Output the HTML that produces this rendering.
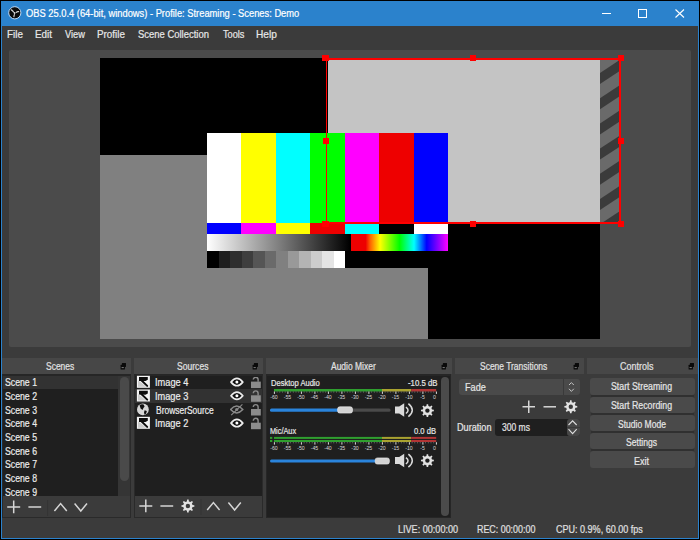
<!DOCTYPE html>
<html><head><meta charset="utf-8">
<style>
*{box-sizing:border-box;margin:0;padding:0}
html,body{width:700px;height:540px;overflow:hidden;background:#000}
body{position:relative;font-family:"Liberation Sans",sans-serif;color:#e8e8e8}
.a{position:absolute}
.t{position:absolute;white-space:nowrap;line-height:1;transform-origin:0 0;-webkit-text-stroke:0.2px currentColor}
.dt{position:absolute;top:358px;height:16px;background:#474747}
.fl{position:absolute;top:363px;width:6px;height:6px}
.tk{position:absolute;font-size:5.2px;line-height:1;color:#d8d8d8;white-space:nowrap}
</style></head>
<body>
<div class="a" style="left:1px;top:1px;width:698px;height:538px;background:#2b82cc"></div>
<div class="a" style="left:2px;top:26px;width:696px;height:512px;background:#3b3b3b"></div>
<!-- OBS logo -->
<svg class="a" style="left:0;top:0" width="30" height="26" viewBox="0 0 30 26">
 <circle cx="14.8" cy="12.8" r="6.1" fill="#0a0a0a" stroke="#cfe6ff" stroke-width="0.9"/>
 <g fill="none" stroke="#d0d0d0" stroke-linecap="round"><path d="M11.4 9.9 Q12.6 10.6 13.5 12" stroke-width="1.3"/><path d="M16.3 12.3 Q17.2 11.3 18.6 11.6" stroke-width="1.2"/><path d="M14.4 14.6 Q14 15.6 13.9 16.6" stroke-width="1.2"/></g><circle cx="14.6" cy="13" r="0.9" fill="#e0e0e0"/>
</svg>
<!-- window controls -->
<div class="a" style="left:602px;top:13px;width:9px;height:1px;background:#fff"></div>
<div class="a" style="left:638px;top:9px;width:9px;height:9px;border:1px solid #fff"></div>
<svg class="a" style="left:675px;top:9px" width="10" height="9" viewBox="0 0 10 9"><path d="M0.5 0.5 L9 8.5 M9 0.5 L0.5 8.5" stroke="#fff" stroke-width="1.1"/></svg>

<!-- preview -->
<div class="a" style="left:9px;top:50px;width:682px;height:297px;background:#4b4b4b;border-radius:2px"></div>
<div class="a" style="left:100px;top:58px;width:500px;height:281px;background:#000;overflow:hidden">
 <div class="a" style="left:227.5px;top:1.5px;width:273px;height:164px;background:#c4c4c4"></div>
 <div class="a" style="left:0;top:97px;width:328px;height:184px;background:#808080"></div>
 <div class="a" style="left:107px;top:75px;width:241px;height:135px;background:#000">
  <div class="a" style="left:0;top:0;width:241px;height:90px;display:flex">
   <div style="flex:1;background:#fff"></div><div style="flex:1;background:#ff0"></div><div style="flex:1;background:#0ff"></div><div style="flex:1;background:#0f0"></div><div style="flex:1;background:#f0f"></div><div style="flex:1;background:#e00"></div><div style="flex:1;background:#00f"></div>
  </div>
  <div class="a" style="left:0;top:90px;width:241px;height:11px;display:flex">
   <div style="flex:1;background:#00f"></div><div style="flex:1;background:#f0f"></div><div style="flex:1;background:#ff0"></div><div style="flex:1;background:#e00"></div><div style="flex:1;background:#0ff"></div><div style="flex:1;background:#000"></div><div style="flex:1;background:#fff"></div>
  </div>
  <div class="a" style="left:0;top:101px;width:143px;height:17px;background:linear-gradient(to right,#fff,#000)"></div>
  <div class="a" style="left:144px;top:101px;width:97px;height:17px;background:linear-gradient(to right,#e00 0%,#e00 15%,#f60 20%,#ff0 30%,#0f0 50%,#0ff 65%,#00f 78%,#f0f 100%)"></div>
  <div class="a" style="left:0;top:118px;width:138px;height:17px;display:flex">
   <div style="flex:1;background:#000"></div><div style="flex:1;background:#1e1e1e"></div><div style="flex:1;background:#2e2e2e"></div><div style="flex:1;background:#3e3e3e"></div><div style="flex:1;background:#555"></div><div style="flex:1;background:#6a6a6a"></div><div style="flex:1;background:#808080"></div><div style="flex:1;background:#999"></div><div style="flex:1;background:#b4b4b4"></div><div style="flex:1;background:#ccc"></div><div style="flex:1;background:#e4e4e4"></div><div style="flex:1;background:#fff"></div>
  </div>
 </div>
</div>
<svg class="a" style="left:600px;top:58px" width="20" height="165" viewBox="600 58 20 165"><rect x="600" y="58" width="20" height="165" fill="#6a6a6a"/><g fill="#3b3b3b"><path d="M600 22.60 L620 9.40 L620 20.40 L600 33.60 Z"/><path d="M600 47.80 L620 34.60 L620 45.60 L600 58.80 Z"/><path d="M600 73.00 L620 59.80 L620 70.80 L600 84.00 Z"/><path d="M600 98.20 L620 85.00 L620 96.00 L600 109.20 Z"/><path d="M600 123.40 L620 110.20 L620 121.20 L600 134.40 Z"/><path d="M600 148.60 L620 135.40 L620 146.40 L600 159.60 Z"/><path d="M600 173.80 L620 160.60 L620 171.60 L600 184.80 Z"/><path d="M600 199.00 L620 185.80 L620 196.80 L600 210.00 Z"/><path d="M600 224.20 L620 211.00 L620 222.00 L600 235.20 Z"/><path d="M600 249.40 L620 236.20 L620 247.20 L600 260.40 Z"/><path d="M600 274.60 L620 261.40 L620 272.40 L600 285.60 Z"/></g></svg>
<div class="a" style="left:326px;top:57.8px;width:295px;height:2px;background:#f00"></div>
<div class="a" style="left:326px;top:222px;width:295px;height:2px;background:#f00"></div>
<div class="a" style="left:325.9px;top:58px;width:1.5px;height:166px;background:#f00"></div>
<div class="a" style="left:619.1px;top:58px;width:2px;height:166px;background:#f00"></div>
<div class="a" style="left:322.40px;top:54.95px;width:6.6px;height:6.5px;background:#f00"></div>
<div class="a" style="left:469.70px;top:54.95px;width:6.6px;height:6.5px;background:#f00"></div>
<div class="a" style="left:617.50px;top:54.95px;width:6.6px;height:6.5px;background:#f00"></div>
<div class="a" style="left:322.50px;top:137.85px;width:6.6px;height:6.5px;background:#f00"></div>
<div class="a" style="left:617.50px;top:137.85px;width:6.6px;height:6.5px;background:#f00"></div>
<div class="a" style="left:322.40px;top:220.95px;width:6.6px;height:6.5px;background:#f00"></div>
<div class="a" style="left:469.70px;top:220.95px;width:6.6px;height:6.5px;background:#f00"></div>
<div class="a" style="left:617.50px;top:220.95px;width:6.6px;height:6.5px;background:#f00"></div>

<!-- dock titles -->
<div class="dt" style="left:2px;width:129px"></div>
<div class="dt" style="left:134px;width:129px"></div>
<div class="dt" style="left:266px;width:186px"></div>
<div class="dt" style="left:455px;width:129px"></div>
<div class="dt" style="left:587px;width:111px"></div>

<!-- Scenes dock body -->
<div class="a" style="left:2px;top:374px;width:129px;height:144px;border:1px solid #2a2a2a;border-top:2px solid #262626;background:#3b3b3b"></div>
<div class="a" style="left:3px;top:376px;width:115px;height:120px;background:#1f1f1f"></div>
<div class="a" style="left:3px;top:375.6px;width:115px;height:13.6px;background:#323232"></div>
<div class="a" style="left:118px;top:376px;width:12px;height:120px;background:#353535"></div>
<div class="a" style="left:120px;top:376.6px;width:9px;height:104px;background:#4a4a4a;border-radius:4.5px"></div>

<!-- Sources dock body -->
<div class="a" style="left:134px;top:374px;width:129px;height:144px;border:1px solid #2a2a2a;border-top:2px solid #262626;background:#3b3b3b"></div>
<div class="a" style="left:135px;top:376px;width:127px;height:120px;background:#1f1f1f"></div>
<div class="a" style="left:135px;top:389.3px;width:127px;height:13.8px;background:#323232"></div>

<!-- Audio dock body -->
<div class="a" style="left:266px;top:374px;width:185px;height:143.5px;border:1px solid #262626;border-top:2px solid #262626;background:#1f1f1f"></div>
<div class="a" style="left:441px;top:377px;width:8px;height:138.5px;background:#4b4b4b;border-radius:4px"></div>


<!-- Scenes toolbar -->
<svg class="a" style="left:2px;top:495.5px" width="129" height="22" viewBox="0 0 129 22">
 <g stroke="#d6d6d6" stroke-width="1.5" fill="none">
  <path d="M5.2 11 H18.2 M11.7 4.6 V17.2"/>
  <path d="M26.4 11 H39.2"/>
  <path d="M52.4 15 L58.6 7.6 L64.8 15"/>
  <path d="M72.6 7.6 L78.8 15 L85 7.6"/>
 </g>
 <path d="M45.6 4 V20" stroke="#343434" stroke-width="1"/>
</svg>
<!-- Sources toolbar -->
<svg class="a" style="left:134px;top:495px" width="129" height="22" viewBox="0 0 129 22">
 <g stroke="#d6d6d6" stroke-width="1.5" fill="none">
  <path d="M5.3 11 H18.3 M11.8 4.6 V17.2"/>
  <path d="M26.4 11 H39.2"/>
  <path d="M73.2 15 L79.4 7.6 L85.6 15"/>
  <path d="M94.4 7.6 L100.6 15 L106.8 7.6"/>
 </g>
 <g transform="translate(53.9 11)"><g><path d="M-0.99 -4.59 L-0.76 -6.45 L0.76 -6.45 L0.99 -4.59 A4.70 4.70 0 0 1 2.55 -3.95 L4.02 -5.10 L5.10 -4.02 L3.95 -2.55 A4.70 4.70 0 0 1 4.59 -0.99 L6.45 -0.76 L6.45 0.76 L4.59 0.99 A4.70 4.70 0 0 1 3.95 2.55 L5.10 4.02 L4.02 5.10 L2.55 3.95 A4.70 4.70 0 0 1 0.99 4.59 L0.76 6.45 L-0.76 6.45 L-0.99 4.59 A4.70 4.70 0 0 1 -2.55 3.95 L-4.02 5.10 L-5.10 4.02 L-3.95 2.55 A4.70 4.70 0 0 1 -4.59 0.99 L-6.45 0.76 L-6.45 -0.76 L-4.59 -0.99 A4.70 4.70 0 0 1 -3.95 -2.55 L-5.10 -4.02 L-4.02 -5.10 L-2.55 -3.95 A4.70 4.70 0 0 1 -0.99 -4.59 Z M2.20 0 A2.20 2.20 0 1 0 -2.20 0 A2.20 2.20 0 1 0 2.20 0 Z" fill="#e2e2e2" fill-rule="evenodd"/></g></g>
 <path d="M67 4 V20" stroke="#343434" stroke-width="1"/>
</svg>

<!-- Sources icons -->
<svg class="a" style="left:136px;top:375px" width="14" height="56" viewBox="0 0 14 56">
 <g transform="translate(0.9 0.8)"><g>
   <rect x="0" y="0" width="13" height="12" fill="#f4f4f4"/>
   <path d="M1.1 4.4 L1.1 10.9 L9.4 10.9 Z" fill="#cdcdcd"/>
   <path d="M2.1 1.2 H10.9 V3.9 L8.6 5.3 L2.1 5.1 Z" fill="#0d0d0d"/>
   <path d="M4.2 4.2 L10.3 10.1" stroke="#0d0d0d" stroke-width="2" stroke-linecap="round"/>
  </g></g>
 <g transform="translate(0.9 14.5)"><g>
   <rect x="0" y="0" width="13" height="12" fill="#f4f4f4"/>
   <path d="M1.1 4.4 L1.1 10.9 L9.4 10.9 Z" fill="#cdcdcd"/>
   <path d="M2.1 1.2 H10.9 V3.9 L8.6 5.3 L2.1 5.1 Z" fill="#0d0d0d"/>
   <path d="M4.2 4.2 L10.3 10.1" stroke="#0d0d0d" stroke-width="2" stroke-linecap="round"/>
  </g></g>
 <g transform="translate(0.9 41.8)"><g>
   <rect x="0" y="0" width="13" height="12" fill="#f4f4f4"/>
   <path d="M1.1 4.4 L1.1 10.9 L9.4 10.9 Z" fill="#cdcdcd"/>
   <path d="M2.1 1.2 H10.9 V3.9 L8.6 5.3 L2.1 5.1 Z" fill="#0d0d0d"/>
   <path d="M4.2 4.2 L10.3 10.1" stroke="#0d0d0d" stroke-width="2" stroke-linecap="round"/>
  </g></g>
 <circle cx="6.9" cy="34.4" r="5.9" fill="#d6d6d6"/>
 <path d="M3.6 30.2 Q5.4 28.8 7.6 29.6 L8.6 31.4 L7.4 33 L6.6 35 L4.6 33.4 Z" fill="#111"/>
 <path d="M8.6 35.2 L10.8 36 L10.2 38.6 L8.6 39.8 L8 37.4 Z" fill="#111"/>
</svg>
<svg class="a" style="left:230px;top:377px" width="34" height="56" viewBox="0 0 34 56">
 <g transform="translate(0.2 1.1)"><g>
   <path d="M0.8 4 Q6.7 -3.3 12.6 4 Q6.7 11.3 0.8 4 Z" fill="#101010" stroke="#ececec" stroke-width="1.7" stroke-linejoin="round"/>
   <circle cx="6.7" cy="4" r="1.5" fill="#ffffff"/>
  </g></g>
 <g transform="translate(0.2 14.8)"><g>
   <path d="M0.8 4 Q6.7 -3.3 12.6 4 Q6.7 11.3 0.8 4 Z" fill="#101010" stroke="#ececec" stroke-width="1.7" stroke-linejoin="round"/>
   <circle cx="6.7" cy="4" r="1.5" fill="#ffffff"/>
  </g></g>
 <g transform="translate(0.2 42.1)"><g>
   <path d="M0.8 4 Q6.7 -3.3 12.6 4 Q6.7 11.3 0.8 4 Z" fill="#101010" stroke="#ececec" stroke-width="1.7" stroke-linejoin="round"/>
   <circle cx="6.7" cy="4" r="1.5" fill="#ffffff"/>
  </g></g>
 <g transform="translate(0 28.5)">
  <path d="M0.6 4 Q6.7 -2.8 12.8 4 Q6.7 10.8 0.6 4 Z" fill="none" stroke="#8a8a8a" stroke-width="1.5"/>
  <circle cx="6.7" cy="4" r="1.6" fill="#8a8a8a"/>
  <path d="M1.2 9.6 L12.4 -1.2" stroke="#8a8a8a" stroke-width="1.1"/>
 </g>
 <g transform="translate(21 0)"><g>
   <rect x="0" y="4.6" width="9.8" height="6.5" fill="#8c8c8c"/>
   <path d="M2.3 2.6 A2.4 2.4 0 0 1 7.1 2.6 V4.8" fill="none" stroke="#8c8c8c" stroke-width="1.4"/>
  </g></g>
 <g transform="translate(21 13.7)"><g>
   <rect x="0" y="4.6" width="9.8" height="6.5" fill="#8c8c8c"/>
   <path d="M2.3 2.6 A2.4 2.4 0 0 1 7.1 2.6 V4.8" fill="none" stroke="#8c8c8c" stroke-width="1.4"/>
  </g></g>
 <g transform="translate(21 27.4)"><g>
   <rect x="0" y="4.6" width="9.8" height="6.5" fill="#8c8c8c"/>
   <path d="M2.3 2.6 A2.4 2.4 0 0 1 7.1 2.6 V4.8" fill="none" stroke="#8c8c8c" stroke-width="1.4"/>
  </g></g>
 <g transform="translate(21 41.1)"><g>
   <rect x="0" y="4.6" width="9.8" height="6.5" fill="#8c8c8c"/>
   <path d="M2.3 2.6 A2.4 2.4 0 0 1 7.1 2.6 V4.8" fill="none" stroke="#8c8c8c" stroke-width="1.4"/>
  </g></g>
</svg>


<svg class="a" style="left:0;top:0" width="700" height="540" viewBox="0 0 700 540">
<rect x="274" y="389.0" width="108" height="2.5" fill="#2f9f2f"/>
<rect x="382" y="389.0" width="29.2" height="2.5" fill="#a9a230"/>
<rect x="411.2" y="389.0" width="25" height="2.5" fill="#b23535"/>
<rect x="273.90" y="391.5" width="1" height="2.4" fill="#dcdcdc"/>
<rect x="276.70" y="391.5" width="0.8" height="1.1" fill="#7a7a7a"/>
<rect x="279.40" y="391.5" width="0.8" height="1.1" fill="#7a7a7a"/>
<rect x="282.10" y="391.5" width="0.8" height="1.1" fill="#7a7a7a"/>
<rect x="284.80" y="391.5" width="0.8" height="1.1" fill="#7a7a7a"/>
<rect x="287.40" y="391.5" width="1" height="2.4" fill="#dcdcdc"/>
<rect x="290.20" y="391.5" width="0.8" height="1.1" fill="#7a7a7a"/>
<rect x="292.90" y="391.5" width="0.8" height="1.1" fill="#7a7a7a"/>
<rect x="295.60" y="391.5" width="0.8" height="1.1" fill="#7a7a7a"/>
<rect x="298.30" y="391.5" width="0.8" height="1.1" fill="#7a7a7a"/>
<rect x="300.90" y="391.5" width="1" height="2.4" fill="#dcdcdc"/>
<rect x="303.70" y="391.5" width="0.8" height="1.1" fill="#7a7a7a"/>
<rect x="306.40" y="391.5" width="0.8" height="1.1" fill="#7a7a7a"/>
<rect x="309.10" y="391.5" width="0.8" height="1.1" fill="#7a7a7a"/>
<rect x="311.80" y="391.5" width="0.8" height="1.1" fill="#7a7a7a"/>
<rect x="314.40" y="391.5" width="1" height="2.4" fill="#dcdcdc"/>
<rect x="317.20" y="391.5" width="0.8" height="1.1" fill="#7a7a7a"/>
<rect x="319.90" y="391.5" width="0.8" height="1.1" fill="#7a7a7a"/>
<rect x="322.60" y="391.5" width="0.8" height="1.1" fill="#7a7a7a"/>
<rect x="325.30" y="391.5" width="0.8" height="1.1" fill="#7a7a7a"/>
<rect x="327.90" y="391.5" width="1" height="2.4" fill="#dcdcdc"/>
<rect x="330.70" y="391.5" width="0.8" height="1.1" fill="#7a7a7a"/>
<rect x="333.40" y="391.5" width="0.8" height="1.1" fill="#7a7a7a"/>
<rect x="336.10" y="391.5" width="0.8" height="1.1" fill="#7a7a7a"/>
<rect x="338.80" y="391.5" width="0.8" height="1.1" fill="#7a7a7a"/>
<rect x="341.40" y="391.5" width="1" height="2.4" fill="#dcdcdc"/>
<rect x="344.20" y="391.5" width="0.8" height="1.1" fill="#7a7a7a"/>
<rect x="346.90" y="391.5" width="0.8" height="1.1" fill="#7a7a7a"/>
<rect x="349.60" y="391.5" width="0.8" height="1.1" fill="#7a7a7a"/>
<rect x="352.30" y="391.5" width="0.8" height="1.1" fill="#7a7a7a"/>
<rect x="354.90" y="391.5" width="1" height="2.4" fill="#dcdcdc"/>
<rect x="357.70" y="391.5" width="0.8" height="1.1" fill="#7a7a7a"/>
<rect x="360.40" y="391.5" width="0.8" height="1.1" fill="#7a7a7a"/>
<rect x="363.10" y="391.5" width="0.8" height="1.1" fill="#7a7a7a"/>
<rect x="365.80" y="391.5" width="0.8" height="1.1" fill="#7a7a7a"/>
<rect x="368.40" y="391.5" width="1" height="2.4" fill="#dcdcdc"/>
<rect x="371.20" y="391.5" width="0.8" height="1.1" fill="#7a7a7a"/>
<rect x="373.90" y="391.5" width="0.8" height="1.1" fill="#7a7a7a"/>
<rect x="376.60" y="391.5" width="0.8" height="1.1" fill="#7a7a7a"/>
<rect x="379.30" y="391.5" width="0.8" height="1.1" fill="#7a7a7a"/>
<rect x="381.90" y="391.5" width="1" height="2.4" fill="#dcdcdc"/>
<rect x="384.70" y="391.5" width="0.8" height="1.1" fill="#7a7a7a"/>
<rect x="387.40" y="391.5" width="0.8" height="1.1" fill="#7a7a7a"/>
<rect x="390.10" y="391.5" width="0.8" height="1.1" fill="#7a7a7a"/>
<rect x="392.80" y="391.5" width="0.8" height="1.1" fill="#7a7a7a"/>
<rect x="395.40" y="391.5" width="1" height="2.4" fill="#dcdcdc"/>
<rect x="398.20" y="391.5" width="0.8" height="1.1" fill="#7a7a7a"/>
<rect x="400.90" y="391.5" width="0.8" height="1.1" fill="#7a7a7a"/>
<rect x="403.60" y="391.5" width="0.8" height="1.1" fill="#7a7a7a"/>
<rect x="406.30" y="391.5" width="0.8" height="1.1" fill="#7a7a7a"/>
<rect x="408.90" y="391.5" width="1" height="2.4" fill="#dcdcdc"/>
<rect x="411.70" y="391.5" width="0.8" height="1.1" fill="#7a7a7a"/>
<rect x="414.40" y="391.5" width="0.8" height="1.1" fill="#7a7a7a"/>
<rect x="417.10" y="391.5" width="0.8" height="1.1" fill="#7a7a7a"/>
<rect x="419.80" y="391.5" width="0.8" height="1.1" fill="#7a7a7a"/>
<rect x="422.40" y="391.5" width="1" height="2.4" fill="#dcdcdc"/>
<rect x="425.20" y="391.5" width="0.8" height="1.1" fill="#7a7a7a"/>
<rect x="427.90" y="391.5" width="0.8" height="1.1" fill="#7a7a7a"/>
<rect x="430.60" y="391.5" width="0.8" height="1.1" fill="#7a7a7a"/>
<rect x="433.30" y="391.5" width="0.8" height="1.1" fill="#7a7a7a"/>
<rect x="435.90" y="391.5" width="1" height="2.4" fill="#dcdcdc"/>
<rect x="274" y="436.9" width="108" height="2" fill="#2f9f2f"/>
<rect x="382" y="436.9" width="29.2" height="2" fill="#a9a230"/>
<rect x="411.2" y="436.9" width="25" height="2" fill="#b23535"/>
<rect x="274" y="440.0" width="108" height="2" fill="#2f9f2f"/>
<rect x="382" y="440.0" width="29.2" height="2" fill="#a9a230"/>
<rect x="411.2" y="440.0" width="25" height="2" fill="#b23535"/>
<rect x="270" y="436.9" width="2.3" height="2" fill="#2f9f2f"/>
<rect x="270" y="440.0" width="2.3" height="2" fill="#2f9f2f"/>
<rect x="273.90" y="442.2" width="1" height="2.4" fill="#dcdcdc"/>
<rect x="276.70" y="442.2" width="0.8" height="1.1" fill="#7a7a7a"/>
<rect x="279.40" y="442.2" width="0.8" height="1.1" fill="#7a7a7a"/>
<rect x="282.10" y="442.2" width="0.8" height="1.1" fill="#7a7a7a"/>
<rect x="284.80" y="442.2" width="0.8" height="1.1" fill="#7a7a7a"/>
<rect x="287.40" y="442.2" width="1" height="2.4" fill="#dcdcdc"/>
<rect x="290.20" y="442.2" width="0.8" height="1.1" fill="#7a7a7a"/>
<rect x="292.90" y="442.2" width="0.8" height="1.1" fill="#7a7a7a"/>
<rect x="295.60" y="442.2" width="0.8" height="1.1" fill="#7a7a7a"/>
<rect x="298.30" y="442.2" width="0.8" height="1.1" fill="#7a7a7a"/>
<rect x="300.90" y="442.2" width="1" height="2.4" fill="#dcdcdc"/>
<rect x="303.70" y="442.2" width="0.8" height="1.1" fill="#7a7a7a"/>
<rect x="306.40" y="442.2" width="0.8" height="1.1" fill="#7a7a7a"/>
<rect x="309.10" y="442.2" width="0.8" height="1.1" fill="#7a7a7a"/>
<rect x="311.80" y="442.2" width="0.8" height="1.1" fill="#7a7a7a"/>
<rect x="314.40" y="442.2" width="1" height="2.4" fill="#dcdcdc"/>
<rect x="317.20" y="442.2" width="0.8" height="1.1" fill="#7a7a7a"/>
<rect x="319.90" y="442.2" width="0.8" height="1.1" fill="#7a7a7a"/>
<rect x="322.60" y="442.2" width="0.8" height="1.1" fill="#7a7a7a"/>
<rect x="325.30" y="442.2" width="0.8" height="1.1" fill="#7a7a7a"/>
<rect x="327.90" y="442.2" width="1" height="2.4" fill="#dcdcdc"/>
<rect x="330.70" y="442.2" width="0.8" height="1.1" fill="#7a7a7a"/>
<rect x="333.40" y="442.2" width="0.8" height="1.1" fill="#7a7a7a"/>
<rect x="336.10" y="442.2" width="0.8" height="1.1" fill="#7a7a7a"/>
<rect x="338.80" y="442.2" width="0.8" height="1.1" fill="#7a7a7a"/>
<rect x="341.40" y="442.2" width="1" height="2.4" fill="#dcdcdc"/>
<rect x="344.20" y="442.2" width="0.8" height="1.1" fill="#7a7a7a"/>
<rect x="346.90" y="442.2" width="0.8" height="1.1" fill="#7a7a7a"/>
<rect x="349.60" y="442.2" width="0.8" height="1.1" fill="#7a7a7a"/>
<rect x="352.30" y="442.2" width="0.8" height="1.1" fill="#7a7a7a"/>
<rect x="354.90" y="442.2" width="1" height="2.4" fill="#dcdcdc"/>
<rect x="357.70" y="442.2" width="0.8" height="1.1" fill="#7a7a7a"/>
<rect x="360.40" y="442.2" width="0.8" height="1.1" fill="#7a7a7a"/>
<rect x="363.10" y="442.2" width="0.8" height="1.1" fill="#7a7a7a"/>
<rect x="365.80" y="442.2" width="0.8" height="1.1" fill="#7a7a7a"/>
<rect x="368.40" y="442.2" width="1" height="2.4" fill="#dcdcdc"/>
<rect x="371.20" y="442.2" width="0.8" height="1.1" fill="#7a7a7a"/>
<rect x="373.90" y="442.2" width="0.8" height="1.1" fill="#7a7a7a"/>
<rect x="376.60" y="442.2" width="0.8" height="1.1" fill="#7a7a7a"/>
<rect x="379.30" y="442.2" width="0.8" height="1.1" fill="#7a7a7a"/>
<rect x="381.90" y="442.2" width="1" height="2.4" fill="#dcdcdc"/>
<rect x="384.70" y="442.2" width="0.8" height="1.1" fill="#7a7a7a"/>
<rect x="387.40" y="442.2" width="0.8" height="1.1" fill="#7a7a7a"/>
<rect x="390.10" y="442.2" width="0.8" height="1.1" fill="#7a7a7a"/>
<rect x="392.80" y="442.2" width="0.8" height="1.1" fill="#7a7a7a"/>
<rect x="395.40" y="442.2" width="1" height="2.4" fill="#dcdcdc"/>
<rect x="398.20" y="442.2" width="0.8" height="1.1" fill="#7a7a7a"/>
<rect x="400.90" y="442.2" width="0.8" height="1.1" fill="#7a7a7a"/>
<rect x="403.60" y="442.2" width="0.8" height="1.1" fill="#7a7a7a"/>
<rect x="406.30" y="442.2" width="0.8" height="1.1" fill="#7a7a7a"/>
<rect x="408.90" y="442.2" width="1" height="2.4" fill="#dcdcdc"/>
<rect x="411.70" y="442.2" width="0.8" height="1.1" fill="#7a7a7a"/>
<rect x="414.40" y="442.2" width="0.8" height="1.1" fill="#7a7a7a"/>
<rect x="417.10" y="442.2" width="0.8" height="1.1" fill="#7a7a7a"/>
<rect x="419.80" y="442.2" width="0.8" height="1.1" fill="#7a7a7a"/>
<rect x="422.40" y="442.2" width="1" height="2.4" fill="#dcdcdc"/>
<rect x="425.20" y="442.2" width="0.8" height="1.1" fill="#7a7a7a"/>
<rect x="427.90" y="442.2" width="0.8" height="1.1" fill="#7a7a7a"/>
<rect x="430.60" y="442.2" width="0.8" height="1.1" fill="#7a7a7a"/>
<rect x="433.30" y="442.2" width="0.8" height="1.1" fill="#7a7a7a"/>
<rect x="435.90" y="442.2" width="1" height="2.4" fill="#dcdcdc"/>
 <rect x="270" y="408.6" width="70" height="3.2" rx="1.5" fill="#2a84dc"/>
 <rect x="350" y="408.6" width="40.5" height="3.2" rx="1.5" fill="#4a4a4a"/>
 <rect x="337.6" y="406.8" width="14.9" height="6.3" rx="2.2" fill="#d2d2d2" stroke="#eeeeee" stroke-width="0.6"/>
 <rect x="270" y="459.4" width="107" height="3.2" rx="1.5" fill="#2a84dc"/>
 <rect x="375.2" y="457.9" width="14.2" height="6.2" rx="2.2" fill="#d2d2d2" stroke="#eeeeee" stroke-width="0.6"/>
 <g fill="#dadada">
  <path d="M395 406.6 H399.2 L404.2 403.3 V416.8 L399.2 413.5 H395 Z"/>
  <path d="M405.9 407.1 Q410.2 410.2 405.9 413.5" fill="none" stroke="#dadada" stroke-width="1.5"/>
  <path d="M408.4 403.7 Q416.2 410.2 408.4 416.7" fill="none" stroke="#dadada" stroke-width="1.5"/>
 </g>
 <g transform="translate(0 50.5)"><g fill="#dadada">
  <path d="M395 406.6 H399.2 L404.2 403.3 V416.8 L399.2 413.5 H395 Z"/>
  <path d="M405.9 407.1 Q410.2 410.2 405.9 413.5" fill="none" stroke="#dadada" stroke-width="1.5"/>
  <path d="M408.4 403.7 Q416.2 410.2 408.4 416.7" fill="none" stroke="#dadada" stroke-width="1.5"/>
 </g></g>
 <g transform="translate(427.4 410.6)"><g><path d="M-0.99 -4.59 L-0.76 -6.45 L0.76 -6.45 L0.99 -4.59 A4.70 4.70 0 0 1 2.55 -3.95 L4.02 -5.10 L5.10 -4.02 L3.95 -2.55 A4.70 4.70 0 0 1 4.59 -0.99 L6.45 -0.76 L6.45 0.76 L4.59 0.99 A4.70 4.70 0 0 1 3.95 2.55 L5.10 4.02 L4.02 5.10 L2.55 3.95 A4.70 4.70 0 0 1 0.99 4.59 L0.76 6.45 L-0.76 6.45 L-0.99 4.59 A4.70 4.70 0 0 1 -2.55 3.95 L-4.02 5.10 L-5.10 4.02 L-3.95 2.55 A4.70 4.70 0 0 1 -4.59 0.99 L-6.45 0.76 L-6.45 -0.76 L-4.59 -0.99 A4.70 4.70 0 0 1 -3.95 -2.55 L-5.10 -4.02 L-4.02 -5.10 L-2.55 -3.95 A4.70 4.70 0 0 1 -0.99 -4.59 Z M2.20 0 A2.20 2.20 0 1 0 -2.20 0 A2.20 2.20 0 1 0 2.20 0 Z" fill="#e2e2e2" fill-rule="evenodd"/></g></g>
 <g transform="translate(427.4 460.6)"><g><path d="M-0.99 -4.59 L-0.76 -6.45 L0.76 -6.45 L0.99 -4.59 A4.70 4.70 0 0 1 2.55 -3.95 L4.02 -5.10 L5.10 -4.02 L3.95 -2.55 A4.70 4.70 0 0 1 4.59 -0.99 L6.45 -0.76 L6.45 0.76 L4.59 0.99 A4.70 4.70 0 0 1 3.95 2.55 L5.10 4.02 L4.02 5.10 L2.55 3.95 A4.70 4.70 0 0 1 0.99 4.59 L0.76 6.45 L-0.76 6.45 L-0.99 4.59 A4.70 4.70 0 0 1 -2.55 3.95 L-4.02 5.10 L-5.10 4.02 L-3.95 2.55 A4.70 4.70 0 0 1 -4.59 0.99 L-6.45 0.76 L-6.45 -0.76 L-4.59 -0.99 A4.70 4.70 0 0 1 -3.95 -2.55 L-5.10 -4.02 L-4.02 -5.10 L-2.55 -3.95 A4.70 4.70 0 0 1 -0.99 -4.59 Z M2.20 0 A2.20 2.20 0 1 0 -2.20 0 A2.20 2.20 0 1 0 2.20 0 Z" fill="#e2e2e2" fill-rule="evenodd"/></g></g>
</svg>
<div class="tk" style="left:274.0px;top:394.8px;width:20px;margin-left:-10px;text-align:center">-60</div>
<div class="tk" style="left:287.5px;top:394.8px;width:20px;margin-left:-10px;text-align:center">-55</div>
<div class="tk" style="left:301.0px;top:394.8px;width:20px;margin-left:-10px;text-align:center">-50</div>
<div class="tk" style="left:314.5px;top:394.8px;width:20px;margin-left:-10px;text-align:center">-45</div>
<div class="tk" style="left:328.0px;top:394.8px;width:20px;margin-left:-10px;text-align:center">-40</div>
<div class="tk" style="left:341.5px;top:394.8px;width:20px;margin-left:-10px;text-align:center">-35</div>
<div class="tk" style="left:355.0px;top:394.8px;width:20px;margin-left:-10px;text-align:center">-30</div>
<div class="tk" style="left:368.5px;top:394.8px;width:20px;margin-left:-10px;text-align:center">-25</div>
<div class="tk" style="left:382.0px;top:394.8px;width:20px;margin-left:-10px;text-align:center">-20</div>
<div class="tk" style="left:395.5px;top:394.8px;width:20px;margin-left:-10px;text-align:center">-15</div>
<div class="tk" style="left:409.0px;top:394.8px;width:20px;margin-left:-10px;text-align:center">-10</div>
<div class="tk" style="left:422.5px;top:394.8px;width:20px;margin-left:-10px;text-align:center">-5</div>
<div class="tk" style="left:433.0px;top:394.8px">0</div>
<div class="tk" style="left:274.0px;top:446.0px;width:20px;margin-left:-10px;text-align:center">-60</div>
<div class="tk" style="left:287.5px;top:446.0px;width:20px;margin-left:-10px;text-align:center">-55</div>
<div class="tk" style="left:301.0px;top:446.0px;width:20px;margin-left:-10px;text-align:center">-50</div>
<div class="tk" style="left:314.5px;top:446.0px;width:20px;margin-left:-10px;text-align:center">-45</div>
<div class="tk" style="left:328.0px;top:446.0px;width:20px;margin-left:-10px;text-align:center">-40</div>
<div class="tk" style="left:341.5px;top:446.0px;width:20px;margin-left:-10px;text-align:center">-35</div>
<div class="tk" style="left:355.0px;top:446.0px;width:20px;margin-left:-10px;text-align:center">-30</div>
<div class="tk" style="left:368.5px;top:446.0px;width:20px;margin-left:-10px;text-align:center">-25</div>
<div class="tk" style="left:382.0px;top:446.0px;width:20px;margin-left:-10px;text-align:center">-20</div>
<div class="tk" style="left:395.5px;top:446.0px;width:20px;margin-left:-10px;text-align:center">-15</div>
<div class="tk" style="left:409.0px;top:446.0px;width:20px;margin-left:-10px;text-align:center">-10</div>
<div class="tk" style="left:422.5px;top:446.0px;width:20px;margin-left:-10px;text-align:center">-5</div>
<div class="tk" style="left:433.0px;top:446.0px">0</div>

<div class="a" style="left:458.7px;top:378.9px;width:121.3px;height:16px;background:#4a4a4a;border-radius:3px"></div>
<div class="a" style="left:563.2px;top:378.9px;width:1px;height:16px;background:#3a3a3a"></div>
<svg class="a" style="left:455px;top:374px" width="129" height="66" viewBox="0 0 129 66">
 <path d="M114 11 L116.4 8.6 L118.8 11 M114 14.8 L116.4 17.4 L118.8 14.8" fill="none" stroke="#d0d0d0" stroke-width="0.9"/>
 <g stroke="#d6d6d6" stroke-width="1.5" fill="none">
  <path d="M67.5 32.8 H80 M73.75 26.5 V39"/>
  <path d="M88.5 32.8 H101"/>
 </g>
 <g transform="translate(115.8 32.8)"><g><path d="M-0.99 -4.59 L-0.76 -6.45 L0.76 -6.45 L0.99 -4.59 A4.70 4.70 0 0 1 2.55 -3.95 L4.02 -5.10 L5.10 -4.02 L3.95 -2.55 A4.70 4.70 0 0 1 4.59 -0.99 L6.45 -0.76 L6.45 0.76 L4.59 0.99 A4.70 4.70 0 0 1 3.95 2.55 L5.10 4.02 L4.02 5.10 L2.55 3.95 A4.70 4.70 0 0 1 0.99 4.59 L0.76 6.45 L-0.76 6.45 L-0.99 4.59 A4.70 4.70 0 0 1 -2.55 3.95 L-4.02 5.10 L-5.10 4.02 L-3.95 2.55 A4.70 4.70 0 0 1 -4.59 0.99 L-6.45 0.76 L-6.45 -0.76 L-4.59 -0.99 A4.70 4.70 0 0 1 -3.95 -2.55 L-5.10 -4.02 L-4.02 -5.10 L-2.55 -3.95 A4.70 4.70 0 0 1 -0.99 -4.59 Z M2.20 0 A2.20 2.20 0 1 0 -2.20 0 A2.20 2.20 0 1 0 2.20 0 Z" fill="#e2e2e2" fill-rule="evenodd"/></g></g>
</svg>
<div class="a" style="left:495px;top:419.2px;width:85px;height:16.5px;background:#1f1f1f;border-radius:3px"></div>
<div class="a" style="left:566.5px;top:419.2px;width:13.5px;height:16.5px;background:#474747;border-radius:3px"></div>
<div class="a" style="left:566.5px;top:427.2px;width:13.5px;height:1px;background:#3a3a3a"></div>
<svg class="a" style="left:566px;top:419px" width="14" height="17" viewBox="0 0 14 17">
 <path d="M2.5 6 L6.6 1.8 L10.7 6 M2.5 10.2 L6.6 14.6 L10.7 10.2" fill="none" stroke="#dedede" stroke-width="1.1"/>
</svg>

<svg class="a" style="left:119.9px;top:362px" width="7" height="8" viewBox="0 0 7 8"><path d="M1.9 1.2 Q2 0.9 2.4 0.9 H5.6 Q6 0.9 6 1.3 V4.6 Q6 5 5.6 5 H2 Z" fill="#0a0a0a"/><path d="M0.6 3.2 Q0.6 2.7 1.1 2.7 H4.4 Q4.9 2.7 4.9 3.2 V7 Q4.9 7.5 4.4 7.5 H1.1 Q0.6 7.5 0.6 7 Z" fill="#0a0a0a"/><path d="M1.6 5.6 H3.8" stroke="#9a9a9a" stroke-width="0.8"/></svg>
<svg class="a" style="left:252.0px;top:362px" width="7" height="8" viewBox="0 0 7 8"><path d="M1.9 1.2 Q2 0.9 2.4 0.9 H5.6 Q6 0.9 6 1.3 V4.6 Q6 5 5.6 5 H2 Z" fill="#0a0a0a"/><path d="M0.6 3.2 Q0.6 2.7 1.1 2.7 H4.4 Q4.9 2.7 4.9 3.2 V7 Q4.9 7.5 4.4 7.5 H1.1 Q0.6 7.5 0.6 7 Z" fill="#0a0a0a"/><path d="M1.6 5.6 H3.8" stroke="#9a9a9a" stroke-width="0.8"/></svg>
<svg class="a" style="left:440.5px;top:362px" width="7" height="8" viewBox="0 0 7 8"><path d="M1.9 1.2 Q2 0.9 2.4 0.9 H5.6 Q6 0.9 6 1.3 V4.6 Q6 5 5.6 5 H2 Z" fill="#0a0a0a"/><path d="M0.6 3.2 Q0.6 2.7 1.1 2.7 H4.4 Q4.9 2.7 4.9 3.2 V7 Q4.9 7.5 4.4 7.5 H1.1 Q0.6 7.5 0.6 7 Z" fill="#0a0a0a"/><path d="M1.6 5.6 H3.8" stroke="#9a9a9a" stroke-width="0.8"/></svg>
<svg class="a" style="left:573.2px;top:362px" width="7" height="8" viewBox="0 0 7 8"><path d="M1.9 1.2 Q2 0.9 2.4 0.9 H5.6 Q6 0.9 6 1.3 V4.6 Q6 5 5.6 5 H2 Z" fill="#0a0a0a"/><path d="M0.6 3.2 Q0.6 2.7 1.1 2.7 H4.4 Q4.9 2.7 4.9 3.2 V7 Q4.9 7.5 4.4 7.5 H1.1 Q0.6 7.5 0.6 7 Z" fill="#0a0a0a"/><path d="M1.6 5.6 H3.8" stroke="#9a9a9a" stroke-width="0.8"/></svg>
<svg class="a" style="left:687.5px;top:362px" width="7" height="8" viewBox="0 0 7 8"><path d="M1.9 1.2 Q2 0.9 2.4 0.9 H5.6 Q6 0.9 6 1.3 V4.6 Q6 5 5.6 5 H2 Z" fill="#0a0a0a"/><path d="M0.6 3.2 Q0.6 2.7 1.1 2.7 H4.4 Q4.9 2.7 4.9 3.2 V7 Q4.9 7.5 4.4 7.5 H1.1 Q0.6 7.5 0.6 7 Z" fill="#0a0a0a"/><path d="M1.6 5.6 H3.8" stroke="#9a9a9a" stroke-width="0.8"/></svg>
<div class="a" style="left:591px;top:394.6px;width:103px;height:57px;background:#303030"></div>
<div class="a" style="left:590px;top:378.2px;width:105px;height:16.7px;background:#4a4a4a;border-radius:3px"></div>
<div class="a" style="left:590px;top:396.5px;width:105px;height:16.7px;background:#4a4a4a;border-radius:3px"></div>
<div class="a" style="left:590px;top:414.9px;width:105px;height:16.6px;background:#4a4a4a;border-radius:3px"></div>
<div class="a" style="left:590px;top:433.2px;width:105px;height:16.3px;background:#4a4a4a;border-radius:3px"></div>
<div class="a" style="left:590px;top:451.4px;width:105px;height:16.7px;background:#4a4a4a;border-radius:3px"></div>
<div class="t" id="title" style="left:25.70px;top:9.00px;font-size:10.00px;color:#ffffff;transform:scaleX(0.9330)">OBS 25.0.4 (64-bit, windows) - Profile: Streaming - Scenes: Demo</div>
<div class="t" id="m0" style="left:7.30px;top:29.00px;font-size:10.50px;color:#e8e8e8;transform:scaleX(0.9375)">File</div>
<div class="t" id="m1" style="left:35.40px;top:29.00px;font-size:10.50px;color:#e8e8e8;transform:scaleX(0.9412)">Edit</div>
<div class="t" id="m2" style="left:64.80px;top:29.00px;font-size:10.50px;color:#e8e8e8;transform:scaleX(0.8801)">View</div>
<div class="t" id="m3" style="left:96.80px;top:29.00px;font-size:10.50px;color:#e8e8e8;transform:scaleX(0.9390)">Profile</div>
<div class="t" id="m4" style="left:138.40px;top:29.00px;font-size:10.50px;color:#e8e8e8;transform:scaleX(0.9004)">Scene Collection</div>
<div class="t" id="m5" style="left:222.80px;top:29.00px;font-size:10.50px;color:#e8e8e8;transform:scaleX(0.8750)">Tools</div>
<div class="t" id="m6" style="left:255.50px;top:29.00px;font-size:10.50px;color:#e8e8e8;transform:scaleX(0.9647)">Help</div>
<div class="t" id="d0" style="left:46.10px;top:362.00px;font-size:10.00px;color:#e2e2e2;transform:scaleX(0.8485)">Scenes</div>
<div class="t" id="d1" style="left:176.60px;top:362.00px;font-size:10.00px;color:#e2e2e2;transform:scaleX(0.8569)">Sources</div>
<div class="t" id="d2" style="left:330.90px;top:362.00px;font-size:10.00px;color:#e2e2e2;transform:scaleX(0.8466)">Audio Mixer</div>
<div class="t" id="d3" style="left:479.80px;top:362.00px;font-size:10.00px;color:#e2e2e2;transform:scaleX(0.8464)">Scene Transitions</div>
<div class="t" id="d4" style="left:619.50px;top:362.00px;font-size:10.00px;color:#e2e2e2;transform:scaleX(0.8963)">Controls</div>
<div class="t" id="s0" style="left:4.60px;top:378.00px;font-size:10.00px;color:#ececec;transform:scaleX(0.8717)">Scene 1</div>
<div class="t" id="s1" style="left:4.60px;top:392.00px;font-size:10.00px;color:#ececec;transform:scaleX(0.8717)">Scene 2</div>
<div class="t" id="s2" style="left:4.60px;top:406.00px;font-size:10.00px;color:#ececec;transform:scaleX(0.8717)">Scene 3</div>
<div class="t" id="s3" style="left:4.60px;top:419.00px;font-size:10.00px;color:#ececec;transform:scaleX(0.8717)">Scene 4</div>
<div class="t" id="s4" style="left:4.60px;top:433.00px;font-size:10.00px;color:#ececec;transform:scaleX(0.8717)">Scene 5</div>
<div class="t" id="s5" style="left:4.60px;top:447.00px;font-size:10.00px;color:#ececec;transform:scaleX(0.8717)">Scene 6</div>
<div class="t" id="s6" style="left:4.60px;top:460.00px;font-size:10.00px;color:#ececec;transform:scaleX(0.8717)">Scene 7</div>
<div class="t" id="s7" style="left:4.60px;top:474.00px;font-size:10.00px;color:#ececec;transform:scaleX(0.8717)">Scene 8</div>
<div class="t" id="s8" style="left:4.60px;top:488.00px;font-size:10.00px;color:#ececec;transform:scaleX(0.8717)">Scene 9</div>
<div class="t" id="src0" style="left:155.40px;top:378.00px;font-size:10.00px;color:#ececec;transform:scaleX(0.9225)">Image 4</div>
<div class="t" id="src1" style="left:155.40px;top:392.00px;font-size:10.00px;color:#ececec;transform:scaleX(0.9216)">Image 3</div>
<div class="t" id="src2" style="left:156.40px;top:406.00px;font-size:10.00px;color:#ececec;transform:scaleX(0.8447)">BrowserSource</div>
<div class="t" id="src3" style="left:155.40px;top:419.00px;font-size:10.00px;color:#ececec;transform:scaleX(0.9216)">Image 2</div>
<div class="t" id="a0" style="left:270.90px;top:379.00px;font-size:8.50px;color:#e6e6e6;transform:scaleX(0.8893)">Desktop Audio</div>
<div class="t" id="a1" style="left:408.40px;top:379.00px;font-size:8.50px;color:#e6e6e6;transform:scaleX(0.9167)">-10.5 dB</div>
<div class="t" id="a2" style="left:270.10px;top:427.00px;font-size:8.50px;color:#e6e6e6;transform:scaleX(0.8625)">Mic/Aux</div>
<div class="t" id="a3" style="left:414.40px;top:427.00px;font-size:8.50px;color:#e6e6e6;transform:scaleX(0.8940)">0.0 dB</div>
<div class="t" id="tr0" style="left:465.00px;top:383.00px;font-size:10.00px;color:#e6e6e6;transform:scaleX(0.9115)">Fade</div>
<div class="t" id="tr1" style="left:457.00px;top:423.00px;font-size:10.00px;color:#e6e6e6;transform:scaleX(0.9123)">Duration</div>
<div class="t" id="tr2" style="left:501.50px;top:423.00px;font-size:10.00px;color:#e6e6e6;transform:scaleX(0.8508)">300 ms</div>
<div class="t" id="c0" style="left:611.10px;top:382.00px;font-size:10.00px;color:#e6e6e6;transform:scaleX(0.8784)">Start Streaming</div>
<div class="t" id="c1" style="left:611.10px;top:401.00px;font-size:10.00px;color:#e6e6e6;transform:scaleX(0.8784)">Start Recording</div>
<div class="t" id="c2" style="left:618.40px;top:420.00px;font-size:10.00px;color:#e6e6e6;transform:scaleX(0.8549)">Studio Mode</div>
<div class="t" id="c3" style="left:625.70px;top:438.00px;font-size:10.00px;color:#e6e6e6;transform:scaleX(0.8597)">Settings</div>
<div class="t" id="c4" style="left:633.70px;top:457.00px;font-size:10.00px;color:#e6e6e6;transform:scaleX(0.9022)">Exit</div>
<div class="t" id="st0" style="left:398.40px;top:525.00px;font-size:10.00px;color:#e0e0e0;transform:scaleX(0.9077)">LIVE: 00:00:00</div>
<div class="t" id="st1" style="left:477.10px;top:525.00px;font-size:10.00px;color:#e0e0e0;transform:scaleX(0.8897)">REC: 00:00:00</div>
<div class="t" id="st2" style="left:556.00px;top:525.00px;font-size:10.00px;color:#e0e0e0;transform:scaleX(0.9022)">CPU: 0.9%, 60.00 fps</div>
</body></html>
